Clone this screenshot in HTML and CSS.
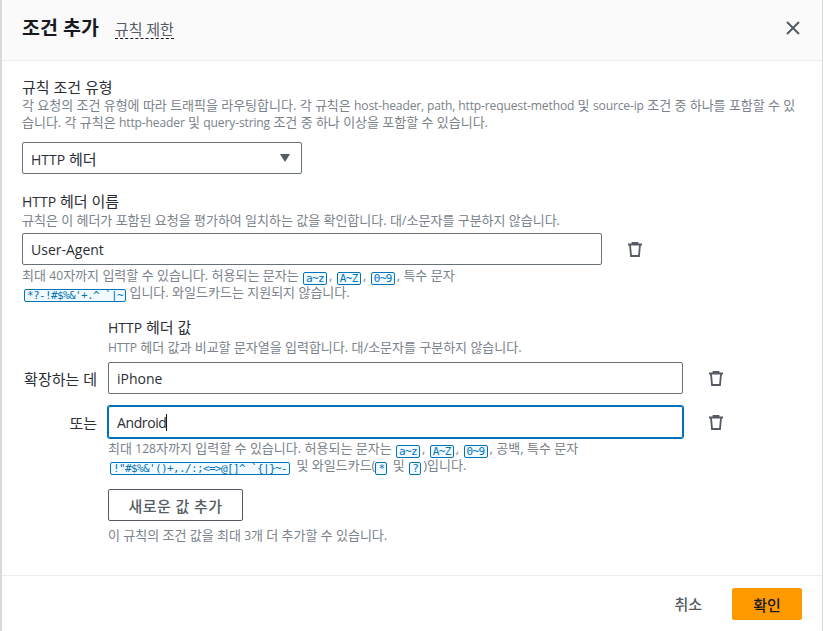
FILE: index.html
```html
<!DOCTYPE html>
<html lang="ko">
<head>
<meta charset="utf-8">
<title>조건 추가</title>
<link rel="stylesheet" href="styles.css">
</head>
<body>
<div class="modal">
  <header class="head">
    <div class="head-title">
      <h2>조건 추가</h2>
      <span class="limit">규칙 제한</span>
    </div>
    <svg class="close" width="16" height="16" viewBox="0 0 16 16"><path d="M2 2l12 12M14 2L2 14"/></svg>
  </header>
  <main class="body">
    <section class="field">
      <div class="label">규칙 조건 유형</div>
      <p class="desc">각 요청의 조건 유형에 따라 트래픽을 라우팅합니다. 각 규칙은 <span class="en">host-header, path, http-request-method</span> 및 <span class="en">source-ip</span> 조건 중 하나를 포함할 수 있<br>습니다. 각 규칙은 <span class="en">http-header</span> 및 <span class="en">query-string</span> 조건 중 하나 이상을 포함할 수 있습니다.</p>
      <div class="select"><span><span class="en">HTTP</span> 헤더</span><i class="caret"></i></div>
    </section>
    <section class="field name-field">
      <div class="label"><span class="en">HTTP</span> 헤더 이름</div>
      <p class="desc">규칙은 이 헤더가 포함된 요청을 평가하여 일치하는 값을 확인합니다. 대/소문자를 구분하지 않습니다.</p>
      <div class="row">
        <div class="input wide">User-Agent</div>
        <svg class="trash" width="16" height="15" viewBox="0 0 16 15"><path d="M1 2.500h14M3 2.500l1 11.500h8l1-11.500M5.500 2.500V1h5v1.500"/></svg>
      </div>
      <p class="hint">최대 <span class="en">40</span>자까지 입력할 수 있습니다. 허용되는 문자는 <code>a~z</code>, <code>A~Z</code>, <code>0~9</code>, 특수 문자<br><code class="first">*?-!#$%&amp;'+.^_`|~</code> 입니다. 와일드카드는 지원되지 않습니다.</p>
    </section>
    <section class="values">
      <div class="label"><span class="en">HTTP</span> 헤더 값</div>
      <p class="desc"><span class="en">HTTP</span> 헤더 값과 비교할 문자열을 입력합니다. 대/소문자를 구분하지 않습니다.</p>
      <div class="value-row">
        <span class="prefix">확장하는 데</span>
        <div class="input value">iPhone</div>
        <svg class="trash" width="16" height="15" viewBox="0 0 16 15"><path d="M1 2.500h14M3 2.500l1 11.500h8l1-11.500M5.500 2.500V1h5v1.500"/></svg>
      </div>
      <div class="value-row">
        <span class="prefix">또는</span>
        <div class="input value focus"><span class="typed">Android</span><i class="cursor"></i></div>
        <svg class="trash" width="16" height="15" viewBox="0 0 16 15"><path d="M1 2.500h14M3 2.500l1 11.500h8l1-11.500M5.500 2.500V1h5v1.500"/></svg>
      </div>
      <p class="hint">최대 <span class="en">128</span>자까지 입력할 수 있습니다. 허용되는 문자는 <code>a~z</code>, <code>A~Z</code>, <code>0~9</code>, 공백, 특수 문자<br><code class="first long">!"#$%&amp;'()+,./:;&lt;=&gt;@[]^_`{|}~-</code> 및 와일드카드(<code class="tight">*</code> 및 <code>?</code>)입니다.</p>
      <button class="add" type="button">새로운 값 추가</button>
      <p class="desc add-note">이 규칙의 조건 값을 최대 <span class="en">3</span>개 더 추가할 수 있습니다.</p>
    </section>
  </main>
  <footer class="foot">
    <span class="cancel">취소</span>
    <button class="ok" type="button">확인</button>
  </footer>
</div>
</body>
</html>
```
FILE: styles.css
```css
* { box-sizing: border-box; }
html, body { margin: 0; height: 100%; }
body {
  background: #fff;
  color: #16191f;
  font-family: "Open Sans", "Noto Sans CJK KR", sans-serif;
  overflow: hidden;
}
.modal {
  width: 823px;
  height: 631px;
  border-left: 2px solid #d5dbdb;
  border-right: 1px solid #d5dbdb;
  display: flex;
  flex-direction: column;
}
.head {
  height: 61px;
  flex: none;
  background: #fafafa;
  border-bottom: 1px solid #eaeded;
  padding: 0 21px 4px 20px;
  display: flex;
  align-items: center;
  justify-content: space-between;
}
.head-title { display: flex; align-items: baseline; gap: 16px; }
h2 { margin: 0; font-size: 19.5px; font-weight: 700; line-height: 24px; color: #16191f; }
.limit {
  font-size: 15px;
  line-height: 18px;
  color: #545b64;
  border-bottom: 1px dashed #16191f;
}
.close { fill: none; stroke: #545b64; stroke-width: 2; }
.body { flex: 1; padding: 16px 20px 0; }
.en { font-size: 0.93em; }
.label { font-size: 15px; line-height: 20px; color: #2a2e35; }
.desc { margin: 0; font-size: 13px; line-height: 17px; color: #7a828a; white-space: nowrap; letter-spacing: -0.02px; }
.desc .en { letter-spacing: -0.15px; }
.select {
  width: 280px;
  height: 32px;
  margin-top: 11px;
  border: 1px solid #687078;
  border-radius: 2px;
  padding: 0 11px 0 8px;
  font-size: 15px;
  color: #2a2e35;
  display: flex;
  align-items: center;
  justify-content: space-between;
}
.caret {
  width: 0;
  height: 0;
  border-left: 5px solid transparent;
  border-right: 5px solid transparent;
  border-top: 8px solid #545b64;
}
.name-field { margin-top: 17px; }
.row { display: flex; align-items: center; margin-top: 4px; }
.input {
  height: 32px;
  border: 1px solid #687078;
  border-radius: 2px;
  padding: 0 8px;
  font-size: 14px;
  color: #2a2e35;
  display: flex;
  align-items: center;
}
.wide { width: 580px; }
.trash { margin-left: 25px; fill: none; stroke: #545b64; stroke-width: 1.8; flex: none; }
.hint { margin: 2px 0 0; font-size: 13px; line-height: 17px; color: #7a828a; white-space: nowrap; }
code {
  display: inline-block;
  vertical-align: -2px;
  margin: -2px 2px -2px 1px;
  font-family: "DejaVu Sans Mono", monospace;
  font-size: 11px;
  letter-spacing: -0.62px;
  line-height: 11px;
  height: 13px;
  padding: 0 2px;
  color: #0073bb;
  background: #f1faff;
  border: 1px solid #0073bb;
  border-radius: 2px;
}
.first { margin-left: 2px; margin-right: 0; }
.long { margin-right: 3px; }
.tight { margin-left: 0; }
.values { margin-top: 16px; padding-left: 86px; }
.values .label { margin-bottom: 1px; }
.value-row { display: flex; align-items: center; margin-top: 6px; }
.value-row + .value-row { margin-top: 12px; }
.prefix {
  width: 86px;
  margin-left: -86px;
  padding-right: 11px;
  flex: none;
  text-align: right;
  font-size: 15px;
  color: #2a2e35;
}
.value { width: 575px; }
.focus { border-color: #0073bb; box-shadow: 0 0 0 1px #0073bb; }
.typed { letter-spacing: -0.4px; }
.cursor { width: 1px; height: 17px; background: #16191f; }
.add {
  display: block;
  width: 135px;
  height: 32px;
  margin-top: 15px;
  padding: 0;
  background: #fff;
  border: 1px solid #545b64;
  border-radius: 2px;
  font: 500 15px "Open Sans", "Noto Sans CJK KR", sans-serif;
  letter-spacing: 0.4px;
  color: #545b64;
}
.add-note { margin-top: 6px; }
.foot {
  height: 56px;
  flex: none;
  border-top: 1px solid #eaeded;
  padding: 12px 20px 0 0;
  display: flex;
  justify-content: flex-end;
  gap: 30px;
}
.cancel { font-size: 15px; font-weight: 500; color: #545b64; line-height: 32px; }
.ok {
  width: 70px;
  height: 32px;
  padding: 0;
  background: #ff9900;
  border: 1px solid #ff9900;
  border-radius: 2px;
  font: 500 15px "Open Sans", "Noto Sans CJK KR", sans-serif;
  color: #16191f;
}
```
